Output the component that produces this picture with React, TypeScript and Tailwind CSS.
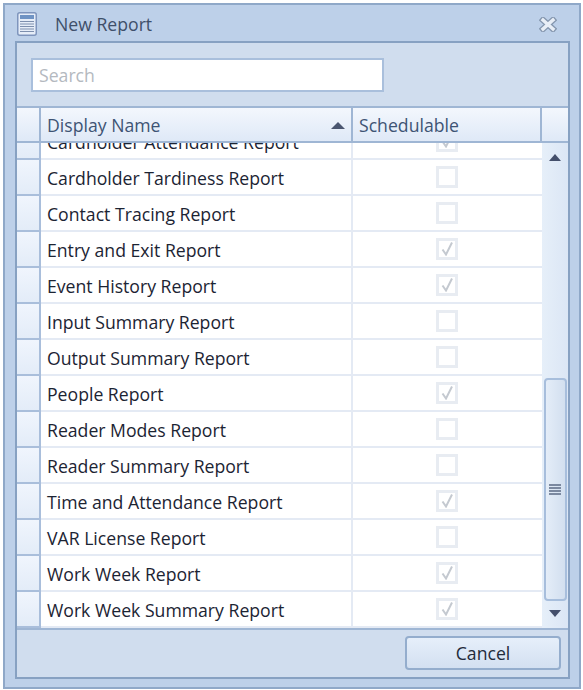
const reports = [
  { name: "Cardholder Tardiness Report", schedulable: false },
  { name: "Contact Tracing Report", schedulable: false },
  { name: "Entry and Exit Report", schedulable: true },
  { name: "Event History Report", schedulable: true },
  { name: "Input Summary Report", schedulable: false },
  { name: "Output Summary Report", schedulable: false },
  { name: "People Report", schedulable: true },
  { name: "Reader Modes Report", schedulable: false },
  { name: "Reader Summary Report", schedulable: false },
  { name: "Time and Attendance Report", schedulable: true },
  { name: "VAR License Report", schedulable: false },
  { name: "Work Week Report", schedulable: true },
  { name: "Work Week Summary Report", schedulable: true },
];

function DocIcon() {
  return (
    <svg width="20" height="24" viewBox="0 0 20 24" className="shrink-0">
      <rect x="0.75" y="0.75" width="18.5" height="22.5" rx="2" fill="#e6edf8" stroke="#7f95bd" strokeWidth="1.5" />
      <rect x="3" y="3" width="14" height="4" fill="#6f93c4" />
      <path d="M3 9.5h14M3 12h14M3 14.5h14M3 17h14M3 19.5h14" stroke="#7d8fae" strokeWidth="1.2" />
    </svg>
  );
}

function CloseIcon() {
  return (
    <svg width="18" height="15" viewBox="0 0 18 15">
      <path d="M4 3 L14 12 M14 3 L4 12" stroke="#8496ae" strokeWidth="6" strokeLinecap="square" />
      <path d="M4 3 L14 12 M14 3 L4 12" stroke="#e8eef6" strokeWidth="3.4" strokeLinecap="square" />
    </svg>
  );
}

function Checkbox({ checked }: { checked: boolean }) {
  return (
    <div className="flex h-[22px] w-[22px] items-center justify-center border-[3px] border-[#e8ecf2] bg-white">
      {checked ? (
        <svg width="14" height="14" viewBox="0 0 14 14">
          <path d="M2.5 7.5 L6 12.5 L12 0.5" fill="none" stroke="#c4c9d0" strokeWidth="2" />
        </svg>
      ) : null}
    </div>
  );
}

function Row({ name, schedulable, clipped }: { name: string; schedulable: boolean; clipped?: boolean }) {
  return (
    <div className={`flex h-9 shrink-0 ${clipped ? "mt-[-19px]" : ""}`}>
      <div className="w-[24px] shrink-0 border-r-2 border-b-2 border-[#a9bedb] bg-gradient-to-b from-[#f0f5fd] to-[#e3ecf8]" />
      <div className="flex w-[312px] shrink-0 items-center border-r-2 border-b-2 border-[#e4eaf4] bg-white pt-[2px] pl-[6px] text-[#1c2433]">
        {name}
      </div>
      <div className="flex flex-1 items-center border-b-2 border-[#e4eaf4] bg-white pl-[83px]">
        <Checkbox checked={schedulable} />
      </div>
    </div>
  );
}

function Scrollbar() {
  return (
    <div className="flex w-[26px] shrink-0 flex-col items-center bg-gradient-to-r from-[#e6eff9] to-[#dbe6f5] pt-[11px]">
      <div className="h-0 w-0 border-x-[6px] border-b-[7px] border-x-transparent border-b-[#444f6b]" />
      <div className="mt-[217px] flex h-[223px] w-[23px] shrink-0 items-center justify-center rounded-[4px] border-2 border-[#a7bedc] bg-gradient-to-r from-[#e4edf8] to-[#d2dfef]">
        <div className="flex flex-col gap-px">
          <div className="h-[2px] w-[12px] bg-[#7b89a0]" />
          <div className="h-[2px] w-[12px] bg-[#7b89a0]" />
          <div className="h-[2px] w-[12px] bg-[#7b89a0]" />
          <div className="h-[2px] w-[12px] bg-[#7b89a0]" />
        </div>
      </div>
      <div className="mt-[9px] h-0 w-0 border-x-[6px] border-t-[7px] border-x-transparent border-t-[#444f6b]" />
    </div>
  );
}

export default function App() {
  return (
    <div className="h-[690px] w-[583px] bg-white pt-[3px] pl-[3px] font-['Open_Sans','Noto_Sans',sans-serif] text-[17.65px]">
      <div className="flex h-[686px] w-[578px] flex-col border-2 border-[#8fa8c8] bg-[#bdd0e9] pr-[9px] pb-[8px] pl-[10px]">
        <div className="flex h-[36px] shrink-0 items-center pt-[2px] pl-[2px]">
          <DocIcon />
          <span className="ml-[18px] text-[#3f4f69]">New Report</span>
          <div className="mr-[13px] ml-auto">
            <CloseIcon />
          </div>
        </div>
        <div className="flex min-h-0 flex-1 flex-col border-2 border-[#87a1c2] bg-[#d0ddee]">
          <div className="flex h-[63px] shrink-0 items-start pt-[15px] pl-[14px]">
            <input
              placeholder="Search"
              readOnly
              className="h-[34px] w-[353px] border-2 border-[#a9bfdc] bg-white pl-[6px] text-[17.65px] outline-none placeholder:text-[#b4b9c0]"
            />
          </div>
          <div className="flex h-[37px] shrink-0 border-y-2 border-y-[#9fb6d4] bg-gradient-to-b from-[#f3f7fd] to-[#dfe9f7] text-[#3e5474]">
            <div className="w-[24px] shrink-0 border-r-2 border-[#9fb6d4]" />
            <div className="flex w-[312px] shrink-0 items-center border-r-2 border-[#9fb6d4] pt-[2px] pl-[6px]">
              <span>Display Name</span>
              <div className="mr-[6px] ml-auto h-0 w-0 border-x-[7px] border-b-[7px] border-x-transparent border-b-[#4a5670]" />
            </div>
            <div className="flex w-[189px] shrink-0 items-center border-r-2 border-[#9fb6d4] pt-[2px] pl-[6px]">
              Schedulable
            </div>
            <div className="flex-1" />
          </div>
          <div className="flex h-[487px] shrink-0 overflow-hidden border-b-2 border-[#9fb6d4]">
            <div className="flex min-w-0 flex-1 flex-col overflow-hidden">
              <Row name="Cardholder Attendance Report" schedulable clipped />
              {reports.map((report) => (
                <Row key={report.name} name={report.name} schedulable={report.schedulable} />
              ))}
            </div>
            <Scrollbar />
          </div>
          <div className="flex flex-1 items-start justify-end pt-[6px] pr-[7px]">
            <button className="flex h-[34px] w-[156px] items-center justify-center rounded-[4px] border-2 border-[#94adcd] bg-gradient-to-b from-[#e6effa] to-[#d3e0f1] text-[#222b3a]">
              Cancel
            </button>
          </div>
        </div>
      </div>
    </div>
  );
}
